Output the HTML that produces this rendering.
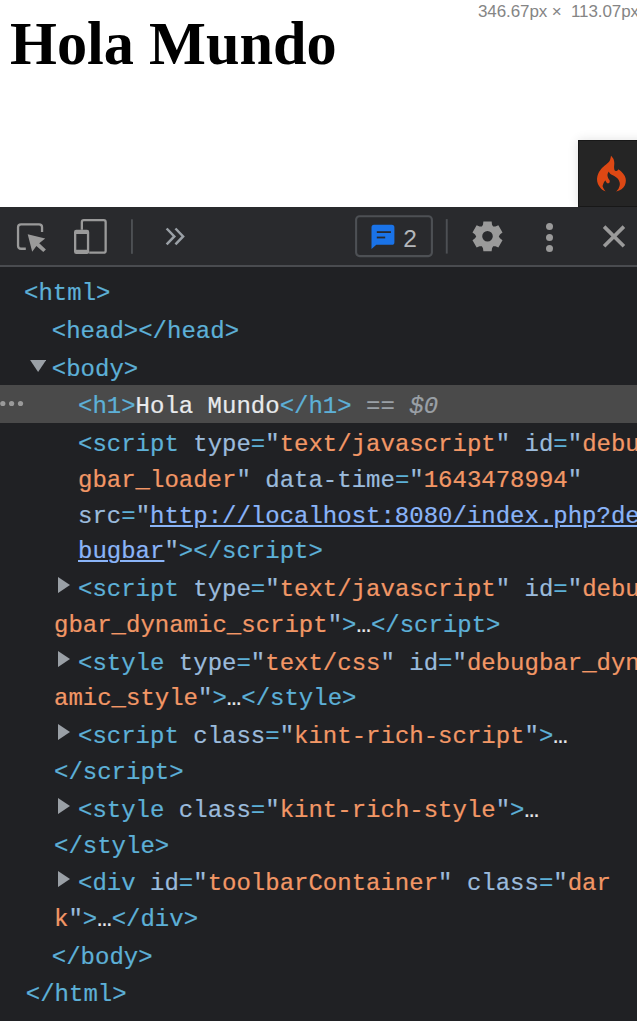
<!DOCTYPE html>
<html><head><meta charset="utf-8"><style>
html,body{margin:0;padding:0;}
body{width:637px;height:1021px;position:relative;overflow:hidden;background:#fff;}
#page{position:absolute;left:0;top:0;width:637px;height:207px;background:#fff;}
#h1{position:absolute;left:10px;top:13.6px;margin:0;font:bold 60.3px/1 "Liberation Serif",serif;color:#000;white-space:pre;transform:scaleY(1.03);transform-origin:0 50px;}
#dim{position:absolute;left:478px;top:3.2px;font:17px/1 "Liberation Sans",sans-serif;color:#858585;letter-spacing:-0.1px;white-space:pre;}
#ci{position:absolute;left:578px;top:140px;width:70px;height:67px;background:#252525;box-sizing:border-box;border:1px solid #181818;box-shadow:0 0 10px rgba(0,0,0,0.12);}
#tb{position:absolute;left:0;top:207px;width:637px;height:58px;background:#292a2d;border-bottom:2px solid #4a4c50;}
#tree{position:absolute;left:0;top:267px;width:637px;height:754px;background:#202124;}
.ln{position:absolute;-webkit-text-stroke:0.2px currentColor;white-space:pre;font:24px/36px "Liberation Mono",monospace;height:36px;color:#9bbbdc;}
.t{color:#5db0d7;}
.n{color:#9bbbdc;}
.v{color:#f29766;}
.x{color:#e8eaed;}
.d{color:#9aa0a6;}
.d i{font-style:italic;}
.e{color:#e8eaed;}
.l{color:#8ab4f8;text-decoration:underline;text-underline-offset:1.6px;text-decoration-thickness:1.6px;}
.tri{position:absolute;}
#sel{position:absolute;left:0;top:385px;width:637px;height:38px;background:#4a4a4a;}
</style></head><body>
<div id="page">
<div id="h1">Hola Mundo</div>
<div id="dim">346.67px × <span style="position:absolute;left:93px">113.07px</span></div>
<div id="ci"></div>
</div>
<div id="tb"></div>
<div id="tree"></div>
<div id="sel"></div>
<div class="ln" style="top:276.10px;left:24.04px"><span class="t">&lt;html&gt;</span></div>
<div class="ln" style="top:313.80px;left:51.80px"><span class="t">&lt;head&gt;&lt;/head&gt;</span></div>
<div class="ln" style="top:351.50px;left:51.80px"><span class="t">&lt;body&gt;</span></div>
<svg class="tri" style="left:29.7px;top:359.80px" width="16.2" height="12" viewBox="0 0 16 12"><path d="M0 0H16L8 12Z" fill="#9aa0a6"/></svg>
<div class="ln" style="top:389.20px;left:78.00px"><span class="t">&lt;h1&gt;</span><span class="x">Hola Mundo</span><span class="t">&lt;/h1&gt;</span><span class="d"> == <i>$0</i></span></div>
<div class="ln" style="top:426.90px;left:78.00px"><span class="t">&lt;script</span> <span class="n">type</span><span class="t">=</span><span class="n">"</span><span class="v">text/javascript</span><span class="n">"</span> <span class="n">id</span><span class="t">=</span><span class="n">"</span><span class="v">debu</span></div>
<div class="ln" style="top:462.73px;left:78.00px"><span class="v">gbar_loader</span><span class="n">"</span> <span class="n">data-time</span><span class="t">=</span><span class="n">"</span><span class="v">1643478994</span><span class="n">"</span></div>
<div class="ln" style="top:498.56px;left:78.00px"><span class="n">src</span><span class="t">=</span><span class="n">"</span><span class="l">http://localhost:8080/index.php?de</span></div>
<div class="ln" style="top:534.39px;left:78.00px"><span class="l">bugbar</span><span class="n">"</span><span class="t">&gt;&lt;/script&gt;</span></div>
<div class="ln" style="top:572.09px;left:78.00px"><span class="t">&lt;script</span> <span class="n">type</span><span class="t">=</span><span class="n">"</span><span class="v">text/javascript</span><span class="n">"</span> <span class="n">id</span><span class="t">=</span><span class="n">"</span><span class="v">debu</span></div>
<svg class="tri" style="left:58.1px;top:577.19px" width="12" height="16.1" viewBox="0 0 12 16"><path d="M0 0L12 8L0 16Z" fill="#9aa0a6"/></svg>
<div class="ln" style="top:607.92px;left:54.00px"><span class="v">gbar_dynamic_script</span><span class="n">"</span><span class="t">&gt;</span><span class="e">…</span><span class="t">&lt;/script&gt;</span></div>
<div class="ln" style="top:645.62px;left:78.00px"><span class="t">&lt;style</span> <span class="n">type</span><span class="t">=</span><span class="n">"</span><span class="v">text/css</span><span class="n">"</span> <span class="n">id</span><span class="t">=</span><span class="n">"</span><span class="v">debugbar_dyn</span></div>
<svg class="tri" style="left:58.1px;top:650.72px" width="12" height="16.1" viewBox="0 0 12 16"><path d="M0 0L12 8L0 16Z" fill="#9aa0a6"/></svg>
<div class="ln" style="top:681.45px;left:54.00px"><span class="v">amic_style</span><span class="n">"</span><span class="t">&gt;</span><span class="e">…</span><span class="t">&lt;/style&gt;</span></div>
<div class="ln" style="top:719.15px;left:78.00px"><span class="t">&lt;script</span> <span class="n">class</span><span class="t">=</span><span class="n">"</span><span class="v">kint-rich-script</span><span class="n">"</span><span class="t">&gt;</span><span class="e">…</span></div>
<svg class="tri" style="left:58.1px;top:724.25px" width="12" height="16.1" viewBox="0 0 12 16"><path d="M0 0L12 8L0 16Z" fill="#9aa0a6"/></svg>
<div class="ln" style="top:754.98px;left:54.00px"><span class="t">&lt;/script&gt;</span></div>
<div class="ln" style="top:792.68px;left:78.00px"><span class="t">&lt;style</span> <span class="n">class</span><span class="t">=</span><span class="n">"</span><span class="v">kint-rich-style</span><span class="n">"</span><span class="t">&gt;</span><span class="e">…</span></div>
<svg class="tri" style="left:58.1px;top:797.78px" width="12" height="16.1" viewBox="0 0 12 16"><path d="M0 0L12 8L0 16Z" fill="#9aa0a6"/></svg>
<div class="ln" style="top:828.51px;left:54.00px"><span class="t">&lt;/style&gt;</span></div>
<div class="ln" style="top:866.21px;left:78.00px"><span class="t">&lt;div</span> <span class="n">id</span><span class="t">=</span><span class="n">"</span><span class="v">toolbarContainer</span><span class="n">"</span> <span class="n">class</span><span class="t">=</span><span class="n">"</span><span class="v">dar</span></div>
<svg class="tri" style="left:58.1px;top:871.31px" width="12" height="16.1" viewBox="0 0 12 16"><path d="M0 0L12 8L0 16Z" fill="#9aa0a6"/></svg>
<div class="ln" style="top:902.04px;left:54.00px"><span class="v">k</span><span class="n">"</span><span class="t">&gt;</span><span class="e">…</span><span class="t">&lt;/div&gt;</span></div>
<div class="ln" style="top:939.74px;left:51.80px"><span class="t">&lt;/body&gt;</span></div>
<div class="ln" style="top:977.44px;left:25.80px"><span class="t">&lt;/html&gt;</span></div>
<svg id="tbsvg" width="637" height="1021" viewBox="0 0 637 1021" style="position:absolute;left:0;top:0">
<path d="M25.8,248.75 H21.05 Q18.05,248.75 18.05,245.75 V227.35 Q18.05,224.35 21.05,224.35 H39.05 Q42.05,224.35 42.05,227.35 V232" fill="none" stroke="#9a9a9a" stroke-width="2.3"/>
<path d="M27.7,234.2 L45.2,238.4 L39.2,243.2 L45.9,249.4 L43.3,252.1 L36.4,245.9 L32.2,251.7 Z" fill="#9a9a9a"/>
<path d="M81.85,229.8 V222.05 Q81.85,220.05 83.85,220.05 H103.65 Q105.65,220.05 105.65,222.05 V250.65 Q105.65,252.65 103.65,252.65 H89.2" fill="none" stroke="#9a9a9a" stroke-width="2.3"/>
<path fill-rule="evenodd" fill="#9a9a9a" d="M76.2,229.8 H87 Q89.2,229.8 89.2,232 V251.8 Q89.2,254 87,254 H76.2 Q74,254 74,251.8 V232 Q74,229.8 76.2,229.8 Z M76.3,234 V249.8 H86.9 V234 Z"/>
<rect x="131" y="219.3" width="1.9" height="34.5" fill="#4d5054"/>
<path d="M166.65,228.5 L174.3,236.4 L166.65,244.3 M175.45,228.5 L183.1,236.4 L175.45,244.3" fill="none" stroke="#9aa0a6" stroke-width="2.5" stroke-linejoin="miter"/>
<rect x="356.1" y="216.2" width="75.8" height="39.9" rx="3.5" fill="none" stroke="#4d5054" stroke-width="2.1"/>
<path d="M374,224.8 H391.8 Q394.4,224.8 394.4,227.4 V242.2 Q394.4,244.8 391.8,244.8 H376.3 L371.5,249 V227.4 Q371.5,224.8 374,224.8 Z" fill="#1a73e8"/>
<rect x="376.8" y="231.2" width="14.1" height="1.8" fill="#292a2d"/>
<rect x="376.8" y="236.6" width="8.4" height="1.8" fill="#292a2d"/>
<text x="403.2" y="246.7" font-family="Liberation Sans" font-size="24.5" fill="#b4b7bb">2</text>
<rect x="445.8" y="219.1" width="1.9" height="34.5" fill="#4d5054"/>
<path fill-rule="evenodd" fill="#9a9a9a" d="M482.98,224.64 L483.36,221.46 L491.64,221.46 L492.02,224.64 L493.15,226.61 L495.43,226.61 L498.36,225.34 L502.51,232.52 L499.94,234.43 L498.80,236.40 L499.94,238.37 L502.51,240.28 L498.36,247.46 L495.43,246.19 L493.15,246.19 L492.02,248.16 L491.64,251.34 L483.36,251.34 L482.98,248.16 L481.85,246.19 L479.57,246.19 L476.64,247.46 L472.49,240.28 L475.06,238.37 L476.20,236.40 L475.06,234.43 L472.49,232.52 L476.64,225.34 L479.57,226.61 L481.85,226.61Z M492.8,236.3 A5.3,5.3 0 1 0 482.2,236.3 A5.3,5.3 0 1 0 492.8,236.3 Z"/>
<circle cx="549.5" cy="226.5" r="3.5" fill="#9a9a9a"/>
<circle cx="549.5" cy="237.5" r="3.5" fill="#9a9a9a"/>
<circle cx="549.5" cy="248.5" r="3.5" fill="#9a9a9a"/>
<path d="M604.1,226.6 L623.9,246.3 M623.9,226.6 L604.1,246.3" stroke="#9a9a9a" stroke-width="3.6"/>
<path d="M611.03,155.75 C611.45,156.30 612.96,157.85 613.51,159.04 C614.05,160.23 614.24,161.61 614.33,162.89 C614.42,164.17 614.04,165.59 614.05,166.74 C614.07,167.88 614.26,169.10 614.44,169.76 C614.62,170.42 615.03,170.54 615.15,170.69 C615.47,170.72 616.53,171.10 617.08,170.86 C617.63,170.61 618.22,169.48 618.45,169.21 C618.95,169.62 620.42,170.54 621.47,171.68 C622.53,172.83 624.04,174.61 624.77,176.08 C625.50,177.54 625.87,178.92 625.87,180.47 C625.87,182.03 625.50,183.95 624.77,185.42 C624.04,186.88 622.94,188.21 621.47,189.26 C620.01,190.32 616.89,191.32 615.98,191.74 C616.44,191.14 618.08,189.49 618.73,188.16 C619.37,186.84 619.92,185.23 619.82,183.77 C619.73,182.30 619.09,180.66 618.18,179.37 C617.26,178.09 615.61,176.99 614.33,176.08 C613.05,175.16 611.45,174.66 610.48,173.88 C609.52,173.10 608.88,171.82 608.56,171.41 C608.38,172.00 607.51,173.83 607.46,174.98 C607.42,176.12 607.92,177.36 608.29,178.27 C608.65,179.19 609.48,179.74 609.66,180.47 C609.84,181.21 609.80,182.21 609.38,182.67 C608.97,183.13 607.78,183.45 607.19,183.22 C606.59,182.99 606.13,181.80 605.81,181.30 C605.49,180.79 605.36,180.38 605.26,180.20 C604.94,180.79 603.75,182.62 603.34,183.77 C602.93,184.91 602.42,185.78 602.79,187.07 C603.16,188.35 605.08,190.73 605.54,191.46 C604.81,191.00 602.42,190.00 601.14,188.71 C599.86,187.43 598.53,185.42 597.85,183.77 C597.16,182.12 596.93,180.56 597.02,178.82 C597.11,177.08 597.53,175.16 598.40,173.33 C599.27,171.50 600.78,169.48 602.24,167.84 C603.71,166.19 605.90,164.72 607.19,163.44 C608.47,162.16 609.29,161.42 609.93,160.14 C610.58,158.86 610.85,156.48 611.03,155.75 Z" fill="#dd4814"/>
<circle cx="2.8" cy="403.5" r="2.6" fill="#9a9a9a"/>
<circle cx="11.6" cy="403.5" r="2.6" fill="#9a9a9a"/>
<circle cx="20.5" cy="403.5" r="2.6" fill="#9a9a9a"/>
</svg>
</body></html>
